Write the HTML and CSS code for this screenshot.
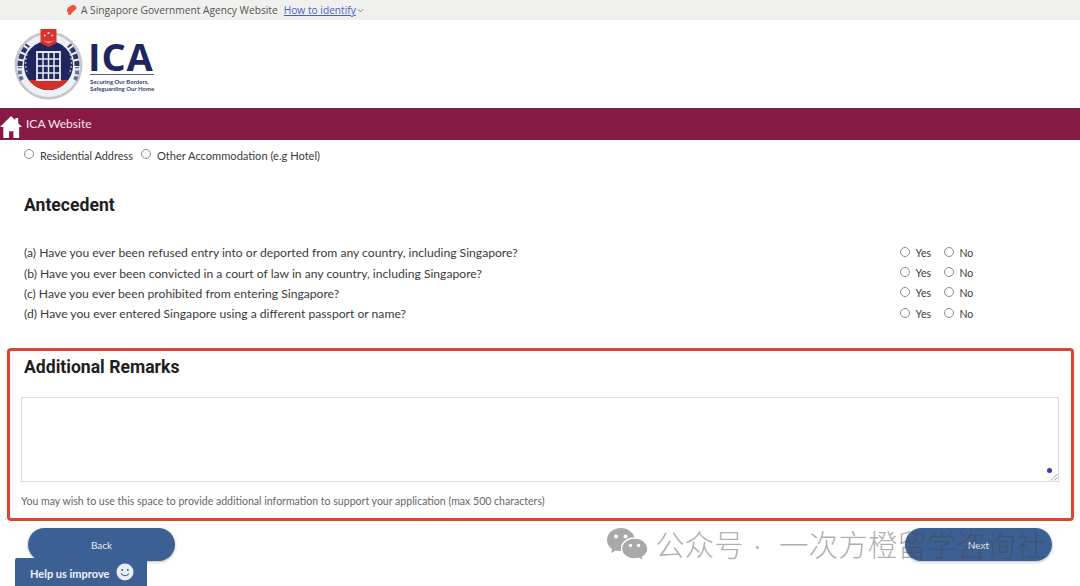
FILE: index.html
```html
<!DOCTYPE html>
<html lang="en">
<head>
<meta charset="utf-8">
<title>ICA</title>
<link rel="stylesheet" href="styles.css">
</head>
<body>
<div class="masthead">
  <svg class="lion" viewBox="0 0 12 12" width="11" height="12"><path d="M7 .5C9.500.2 11.500 1.500 11.300 4 11 5.500 9.500 6 8.500 7L4.500 11.500C3 11.800 1.800 10.500 2.300 9 1 8 .5 6.500 1.500 5 2 3.500 3 2.500 4.500 2 5.500 1 6 .7 7 .5Z"/></svg>
  <span class="masthead-text">A Singapore Government Agency Website</span>
  <a class="masthead-link">How to identify</a>
  <svg class="chev" viewBox="0 0 8 5" width="7" height="5"><path d="M1 1l3 3 3-3"/></svg>
</div>
<header class="brand">
  <svg class="crest" viewBox="0 0 70 72" width="70" height="72">
    <circle cx="34.500" cy="37.500" r="34" fill="#c4c7ce"/>
    <circle cx="34.500" cy="37.500" r="31.500" fill="#eef0f3"/>
    <path d="M6 38c0-8 3-15 8-21M63 38c0-8-3-15-8-21" fill="none" stroke="#2f3868" stroke-width="5" stroke-dasharray="5 2"/>
    <path d="M8 52c-2-4-2.500-8-2-13M61 52c2-4 2.500-8 2-13" fill="none" stroke="#6a7192" stroke-width="4" stroke-dasharray="4 2"/>
    <circle cx="34.500" cy="37.500" r="24.500" fill="#1d2660"/>
    <path d="M14.800 52h39.400A24.500 24.500 0 0 1 34.500 62 24.500 24.500 0 0 1 14.800 52Z" fill="#d23127"/>
    <path d="M13 26c-2 6-2 14 1 20M56 26c2 6 2 14-1 20" fill="none" stroke="#aab0c8" stroke-width="1.500" stroke-dasharray="2 2"/>
    <path d="M23 24h23v28H23Z" fill="#1d2660" stroke="#e8e9ee" stroke-width="1.800"/>
    <path d="M23 31h23M23 38h23M23 45h23M29 24v28M34.500 24v28M40 24v28" stroke="#e8e9ee" stroke-width="1.500"/>
    <path d="M26.500 1h16v14l-8 4-8-4Z" fill="#d9332b"/>
    <circle cx="34.500" cy="5" r="1.100" fill="#fcd"/><circle cx="30.800" cy="7.500" r="1" fill="#fcd"/><circle cx="38.200" cy="7.500" r="1" fill="#fcd"/>
    <path d="M29.500 12c3 2 7 2 10 0-3 3.500-7 3.500-10 0Z" fill="#fcd"/>
  </svg>
  <div class="wordmark">
    <div class="wordmark-ica">ICA</div>
    <div class="wordmark-tag">Securing Our Borders,<br>Safeguarding Our Home</div>
  </div>
</header>
<nav class="navbar">
  <svg class="home" viewBox="0 0 24 24" width="23" height="23"><path d="M11.500 1 0 12.500h3.500V24h6v-7h4.500v7h6V12.500H23l-4-4V3h-3v2.500Z"/></svg>
  <span class="nav-label">ICA Website</span>
</nav>
<main class="content">
  <div class="address-row">
    <label class="opt"><span class="radio"></span>Residential Address</label>
    <label class="opt"><span class="radio"></span>Other Accommodation (e.g Hotel)</label>
  </div>
  <h2 class="antecedent">Antecedent</h2>
  <div class="questions">
    <div class="q"><span>(a) Have you ever been refused entry into or deported from any country, including Singapore?</span><div class="yn"><label class="opt"><span class="radio"></span>Yes</label><label class="opt"><span class="radio"></span>No</label></div></div>
    <div class="q"><span>(b) Have you ever been convicted in a court of law in any country, including Singapore?</span><div class="yn"><label class="opt"><span class="radio"></span>Yes</label><label class="opt"><span class="radio"></span>No</label></div></div>
    <div class="q"><span>(c) Have you ever been prohibited from entering Singapore?</span><div class="yn"><label class="opt"><span class="radio"></span>Yes</label><label class="opt"><span class="radio"></span>No</label></div></div>
    <div class="q"><span>(d) Have you ever entered Singapore using a different passport or name?</span><div class="yn"><label class="opt"><span class="radio"></span>Yes</label><label class="opt"><span class="radio"></span>No</label></div></div>
  </div>
  <section class="remarks">
    <h2 class="remarks-title">Additional Remarks</h2>
    <div class="textarea">
      <span class="dot"></span>
      <svg class="grip" viewBox="0 0 8 8" width="8" height="8"><path d="M7.500 1 1 7.500M7.500 4.500 4.500 7.500"/></svg>
    </div>
    <p class="hint">You may wish to use this space to provide additional information to support your application (max 500 characters)</p>
  </section>
  <div class="actions">
    <button class="btn">Back</button>
    <button class="btn">Next</button>
  </div>
</main>
<div class="feedback">Help us improve
  <svg class="smile" viewBox="0 0 18 18" width="18" height="18"><circle cx="9" cy="9" r="8.500" fill="#e9edf5"/><circle cx="6.200" cy="7" r="1" fill="#3c6094"/><circle cx="11.800" cy="7" r="1" fill="#3c6094"/><path d="M5 10.500c2 3 6 3 8 0" fill="none" stroke="#3c6094" stroke-width="1.100"/></svg>
</div>
<div class="annotation"></div>
<div class="watermark">
  <svg class="wechat" viewBox="0 0 41 33" width="41" height="33">
    <path d="M14 0C6.300 0 0 5.400 0 12c0 3.700 2 7 5 9.200L4 25l4.800-2.500c1.600.4 3.400.6 5.200.6 7.700 0 14-5 14-11.100S21.700 0 14 0Z" fill="#a9a9a9"/>
    <path d="M28 10c-7.700 0-13.500 4.800-13.500 10.700S20.300 31 28 31c1.400 0 2.700-.2 4-.5l4.500 2.500-1-3.900c3.300-2 5.500-5 5.500-8.400C40.500 14.800 35.700 10 28 10Z" fill="#a9a9a9" stroke="#fff" stroke-width="1.500"/>
    <circle cx="9" cy="8.500" r="2" fill="#fff"/><circle cx="18.500" cy="8.500" r="2" fill="#fff"/>
    <circle cx="23.500" cy="17.500" r="1.700" fill="#fff"/><circle cx="31.500" cy="17.500" r="1.700" fill="#fff"/>
  </svg>
  <span>公众号<span class="wm-dot">·</span>一次方橙留学咨询社</span>
</div>
```
FILE: styles.css
```css
* { box-sizing: border-box; }
html, body { margin: 0; padding: 0; }
body {
  width: 1080px;
  height: 586px;
  overflow: hidden;
  position: relative;
  background: #fff;
  font-family: Lato, "Open Sans", sans-serif;
  color: #3a3a3a;
}
.masthead {
  height: 20px;
  background: #f0f0ef;
  display: flex;
  align-items: center;
  padding-left: 66px;
  font-size: 10.200px;
  font-family: "Open Sans", sans-serif;
  color: #555;
}
.lion { fill: #e8573c; margin-right: 4px; }
.masthead-text { margin-right: 6px; }
.masthead-link { color: #4a5fc4; text-decoration: underline; }
.chev { fill: none; stroke: #777; stroke-width: 1; margin-left: 1px; }
.brand {
  height: 88px;
  display: flex;
  align-items: flex-start;
  padding: 8px 0 0 14px;
}
.wordmark { margin: 13px 0 0 6px; color: #1d2660; }
.wordmark-ica {
  font-family: "Open Sans", sans-serif;
  font-weight: 700;
  font-size: 38px;
  line-height: 30px;
  height: 34px;
  width: 64px;
  text-indent: -2px;
  border-bottom: 1px solid #5a6088;
  letter-spacing: .8px;
}
.wordmark-tag { font-size: 6px; line-height: 6.500px; font-weight: 700; margin-top: 4px; color: #3a4070; white-space: nowrap; }
.navbar {
  height: 32px;
  background: #861a44;
  display: flex;
  align-items: center;
  color: #f6e9ee;
  font-size: 12px;
}
.home { fill: #fff; margin: 4px 3px 0 0; flex: none; }
.nav-label { margin-top: -1px; }
.content { padding: 0 21px 0 24px; }
.address-row { display: flex; gap: 8px; height: 31px; align-items: center; font-size: 10.900px; }
.opt { display: flex; align-items: flex-start; white-space: nowrap; }
.address-row .opt + .opt { font-size: 11.100px; }
.radio {
  width: 10px;
  height: 10px;
  border: 1px solid #8c8c8c;
  border-radius: 50%;
  margin: 0 6px 0 0;
  background: #fff;
  flex: none;
}
.antecedent, .remarks-title {
  font-family: Roboto, sans-serif;
  font-weight: 700;
  font-size: 17.600px;
  line-height: 22px;
  margin: 0;
  color: #1e1e1e;
}
.antecedent { margin-top: 23px; }
.questions { margin-top: 26.500px; }
.q {
  height: 20.400px;
  display: flex;
  justify-content: space-between;
  align-items: center;
  font-size: 12.150px;
}
.yn { width: 159.500px; display: flex; gap: 12.500px; font-size: 10.500px; }
.remarks { margin: 27px 0 0 -3px; }
.remarks-title { margin-left: 3px; height: 27px; padding-top: 5px; }
.textarea {
  position: relative;
  height: 85px;
  margin-top: 19px;
  border: 1px solid #dcdfdf;
  background: #fff;
}
.dot {
  position: absolute;
  right: 6px;
  bottom: 8px;
  width: 5px;
  height: 5px;
  border-radius: 50%;
  background: #4338a5;
}
.grip { position: absolute; right: 0; bottom: 0; fill: none; stroke: #888; stroke-width: .8; }
.hint { margin: 13px 0 0; font-size: 10.550px; line-height: 12px; color: #666; }
.actions { display: flex; justify-content: space-between; margin: 21px 7px 0 4px; }
.btn {
  width: 147px;
  height: 33px;
  border: 0;
  border-radius: 17px;
  background: #3c6094;
  color: #e8edf4;
  font-family: Lato, sans-serif;
  font-size: 10px;
  box-shadow: 0 1px 3px rgba(30, 50, 90, .35);
}
.feedback {
  position: absolute;
  left: 15px;
  top: 558px;
  width: 132px;
  height: 28px;
  background: #3c6094;
  border-radius: 2px 2px 0 0;
  color: #f1f4f8;
  font-size: 11px;
  font-weight: 700;
  display: flex;
  align-items: center;
  gap: 7px;
  padding: 2px 0 0 15px;
}
.smile { margin-top: -2px; }
.annotation {
  position: absolute;
  left: 7px;
  top: 348px;
  width: 1067px;
  height: 173px;
  border: 3px solid #d9472e;
  border-radius: 4px;
  pointer-events: none;
}
.watermark {
  position: absolute;
  left: 607px;
  top: 527px;
  display: flex;
  align-items: center;
  gap: 7px;
  font-family: "Noto Sans CJK SC", sans-serif;
  font-weight: 300;
  font-size: 29.600px;
  line-height: 33px;
  color: rgba(70, 70, 70, .45);
  white-space: nowrap;
}
.wm-dot { font-family: Lato, sans-serif; margin: 0 18px 0 10px; }
```
